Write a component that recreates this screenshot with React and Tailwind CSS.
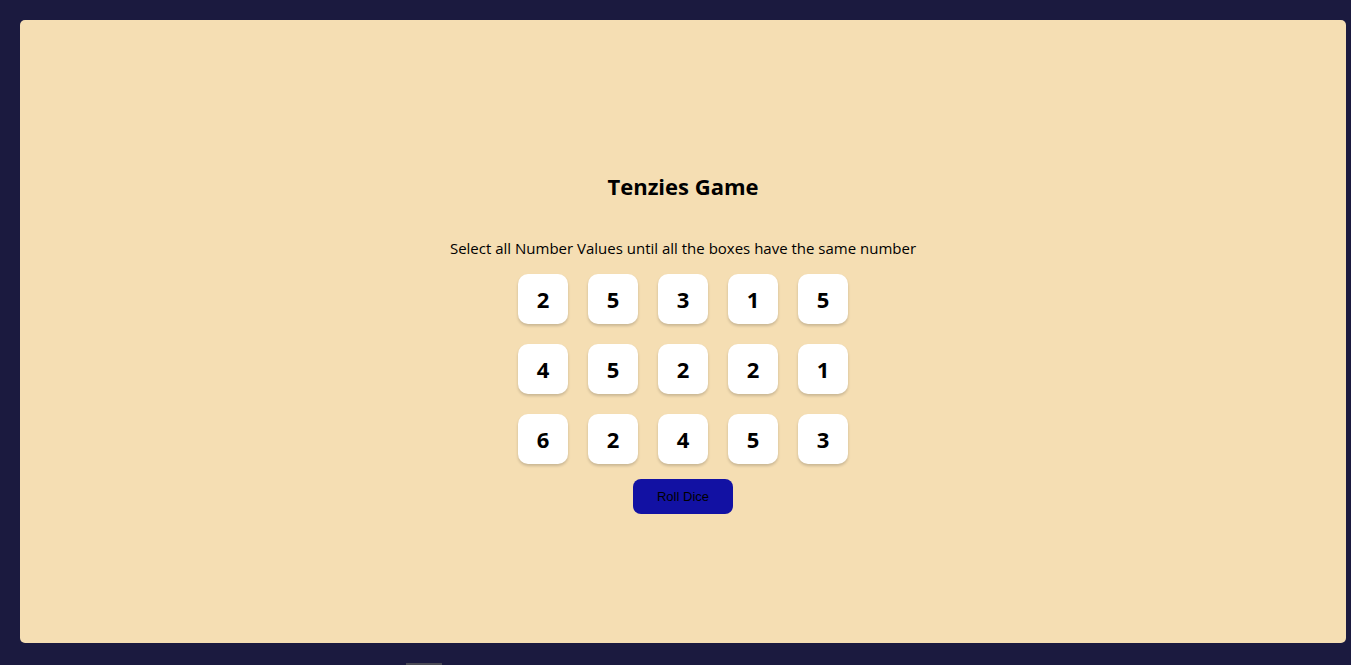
const dice = [2, 5, 3, 1, 5, 4, 5, 2, 2, 1, 6, 2, 4, 5, 3];

const Die = ({ value }) => (
  <div className="w-[50px] h-[50px] bg-white rounded-[10px] shadow-[0_2px_3px_rgba(0,0,0,0.18)] flex items-center justify-center text-[22px] font-bold text-black">
    {value}
  </div>
);

const App = () => {
  return (
    <div className="w-full h-[665px] bg-[#1b1a3f] flex flex-col overflow-hidden font-['Open_Sans','Noto_Sans',sans-serif]">
      <div className="ml-5 mt-5 w-[1326px] shrink-0 h-[623px] bg-[#f5deb3] rounded-[5px] flex flex-col items-center pt-[151px]">
        <h1 className="text-[22px] leading-[30px] font-bold text-black">Tenzies Game</h1>
        <p className="mt-[37px] text-[15px] leading-[20px] text-black">
          Select all Number Values until all the boxes have the same number
        </p>
        <div className="mt-[16px] grid grid-cols-5 gap-5">
          {dice.map((d, i) => (
            <Die key={i} value={d} />
          ))}
        </div>
        <button className="mt-[15px] w-[100px] h-[35px] bg-[#1211a3] rounded-[8px] text-[13px] text-black font-['Liberation_Sans',Arial,sans-serif]">
          Roll Dice
        </button>
      </div>
      <div className="mt-auto h-[2px] flex">
        <div className="ml-[406px] w-[36px] bg-[#4a4a55]" />
      </div>
    </div>
  );
};

export default App;
